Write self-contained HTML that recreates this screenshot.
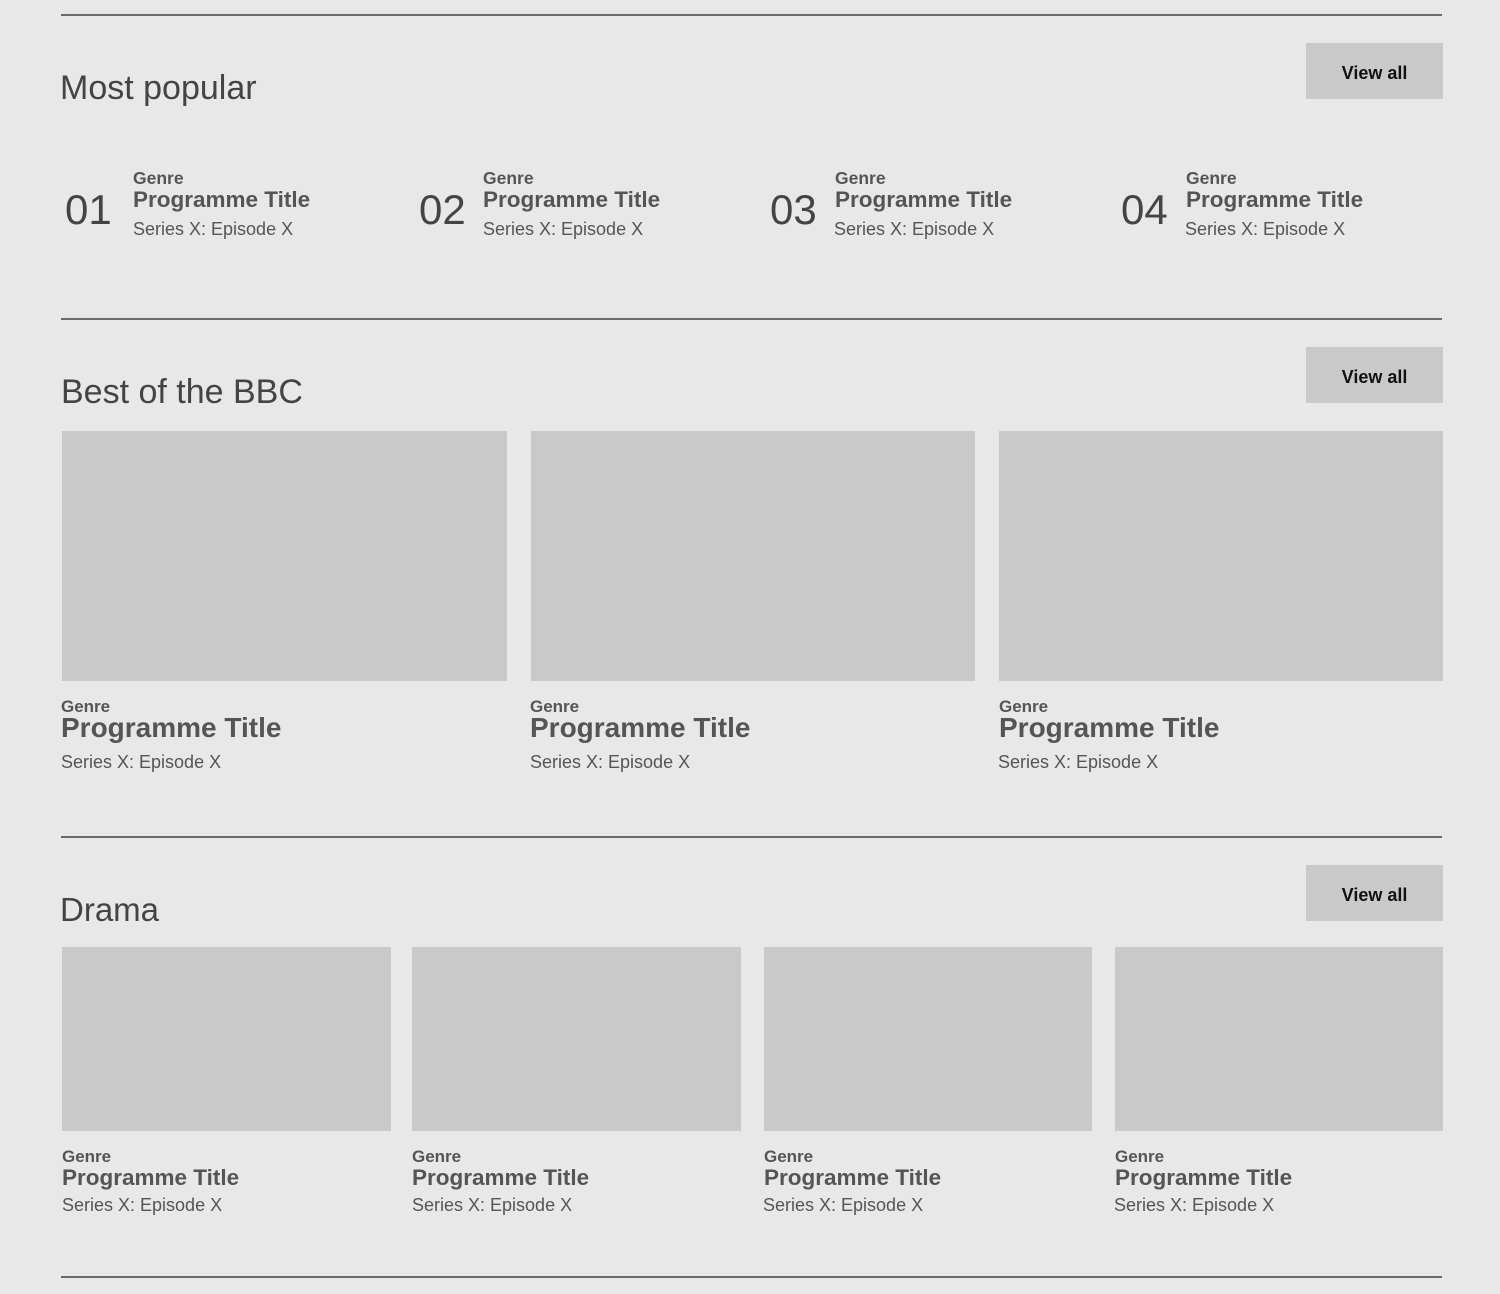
<!DOCTYPE html>
<html><head><meta charset="utf-8"><style>
html,body{margin:0;padding:0;}
body{width:1500px;height:1294px;background:#e8e8e8;position:relative;overflow:hidden;font-family:"Liberation Sans",Arial,sans-serif;color:#4a4a4a;}
.a{position:absolute;line-height:1;white-space:nowrap;}
.ln{position:absolute;left:61px;width:1381px;height:2px;background:#6a6a6a;}
.btn{position:absolute;left:1306px;width:137px;height:56px;background:#c9c9c9;font-weight:bold;font-size:18px;color:#111;text-align:center;line-height:56px;box-sizing:border-box;padding-top:2px;}
.img{position:absolute;background:#c9c9c9;}
.h{font-size:34px;color:#444;}
.num{font-size:42px;color:#444;}
.g{font-weight:bold;color:#555;}
.t{font-weight:bold;color:#555;}
.s{font-size:18px;color:#555;}
</style></head><body>
<div class="ln" style="top:14px"></div>
<div class="ln" style="top:318px"></div>
<div class="ln" style="top:836px"></div>
<div class="ln" style="top:1276px"></div>

<div class="btn" style="top:43px">View all</div>
<div class="btn" style="top:347px">View all</div>
<div class="btn" style="top:865px">View all</div>

<div class="a h" style="left:60px;top:71px">Most popular</div>

<div class="a num" style="left:65px;top:189px">01</div>
<div class="a g" style="left:133px;top:170px;font-size:17.5px">Genre</div>
<div class="a t" style="left:133px;top:189px;font-size:22.5px">Programme Title</div>
<div class="a s" style="left:133px;top:220px">Series X: Episode X</div>

<div class="a num" style="left:419px;top:189px">02</div>
<div class="a g" style="left:483px;top:170px;font-size:17.5px">Genre</div>
<div class="a t" style="left:483px;top:189px;font-size:22.5px">Programme Title</div>
<div class="a s" style="left:483px;top:220px">Series X: Episode X</div>

<div class="a num" style="left:770px;top:189px">03</div>
<div class="a g" style="left:835px;top:170px;font-size:17.5px">Genre</div>
<div class="a t" style="left:835px;top:189px;font-size:22.5px">Programme Title</div>
<div class="a s" style="left:834px;top:220px">Series X: Episode X</div>

<div class="a num" style="left:1121px;top:189px">04</div>
<div class="a g" style="left:1186px;top:170px;font-size:17.5px">Genre</div>
<div class="a t" style="left:1186px;top:189px;font-size:22.5px">Programme Title</div>
<div class="a s" style="left:1185px;top:220px">Series X: Episode X</div>

<div class="a h" style="left:61px;top:375px">Best of the BBC</div>
<div class="img" style="left:62px;top:431px;width:445px;height:250px"></div>
<div class="img" style="left:531px;top:431px;width:444px;height:250px"></div>
<div class="img" style="left:999px;top:431px;width:444px;height:250px"></div>

<div class="a g" style="left:61px;top:698px;font-size:17px">Genre</div>
<div class="a t" style="left:61px;top:714px;font-size:28px">Programme Title</div>
<div class="a s" style="left:61px;top:753px">Series X: Episode X</div>
<div class="a g" style="left:530px;top:698px;font-size:17px">Genre</div>
<div class="a t" style="left:530px;top:714px;font-size:28px">Programme Title</div>
<div class="a s" style="left:530px;top:753px">Series X: Episode X</div>
<div class="a g" style="left:999px;top:698px;font-size:17px">Genre</div>
<div class="a t" style="left:999px;top:714px;font-size:28px">Programme Title</div>
<div class="a s" style="left:998px;top:753px">Series X: Episode X</div>

<div class="a h" style="left:60px;top:893px;font-size:33px">Drama</div>
<div class="img" style="left:62px;top:947px;width:329px;height:184px"></div>
<div class="img" style="left:412px;top:947px;width:329px;height:184px"></div>
<div class="img" style="left:764px;top:947px;width:328px;height:184px"></div>
<div class="img" style="left:1115px;top:947px;width:328px;height:184px"></div>

<div class="a g" style="left:62px;top:1148px;font-size:17px">Genre</div>
<div class="a t" style="left:62px;top:1167px;font-size:22.5px">Programme Title</div>
<div class="a s" style="left:62px;top:1196px">Series X: Episode X</div>
<div class="a g" style="left:412px;top:1148px;font-size:17px">Genre</div>
<div class="a t" style="left:412px;top:1167px;font-size:22.5px">Programme Title</div>
<div class="a s" style="left:412px;top:1196px">Series X: Episode X</div>
<div class="a g" style="left:764px;top:1148px;font-size:17px">Genre</div>
<div class="a t" style="left:764px;top:1167px;font-size:22.5px">Programme Title</div>
<div class="a s" style="left:763px;top:1196px">Series X: Episode X</div>
<div class="a g" style="left:1115px;top:1148px;font-size:17px">Genre</div>
<div class="a t" style="left:1115px;top:1167px;font-size:22.5px">Programme Title</div>
<div class="a s" style="left:1114px;top:1196px">Series X: Episode X</div>
</body></html>
